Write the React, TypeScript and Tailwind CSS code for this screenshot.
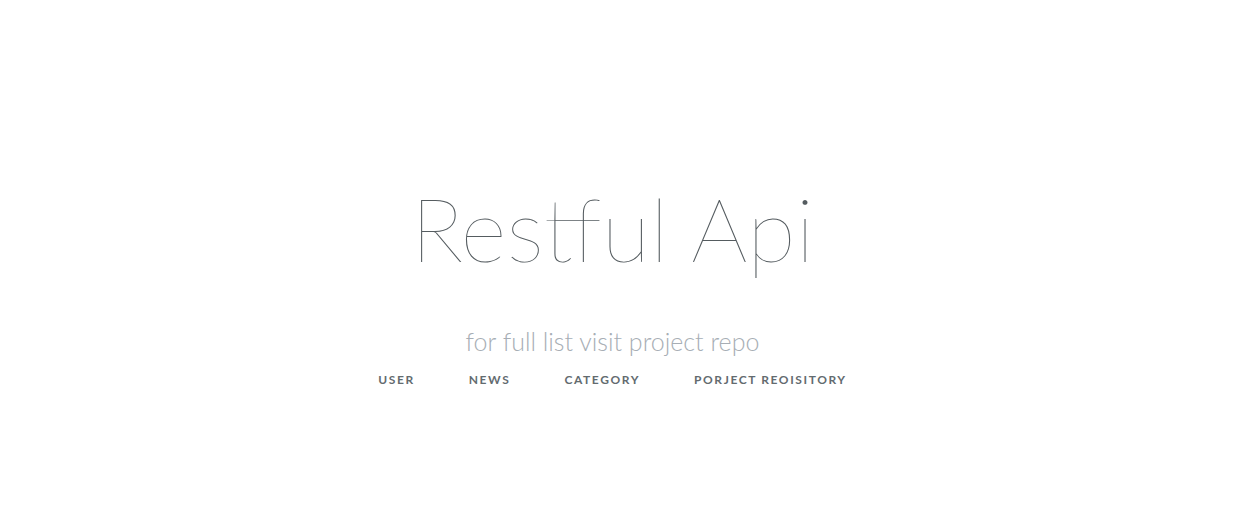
export default function App() {
  return (
    <div className="w-[1255px] h-[513px] bg-white flex flex-col items-center pr-[30px] pt-[173px]" style={{ fontFamily: "Lato, 'Open Sans', sans-serif" }}>
      <div className="text-[89px] leading-[110px] font-thin text-[#555c60]">Restful Api</div>
      <div className="mt-[43px] text-[25px] leading-[30px] font-light text-[#a7aeb5]">for full list visit project repo</div>
      <div className="mt-[12px] flex">
        {["User", "News", "Category", "Porject Reoisitory"].map((l) => (
          <a key={l} href="#" className="px-[27px] text-[12px] leading-[24px] font-bold tracking-[0.1rem] uppercase text-[#636b6f] no-underline">{l}</a>
        ))}
      </div>
    </div>
  );
}
